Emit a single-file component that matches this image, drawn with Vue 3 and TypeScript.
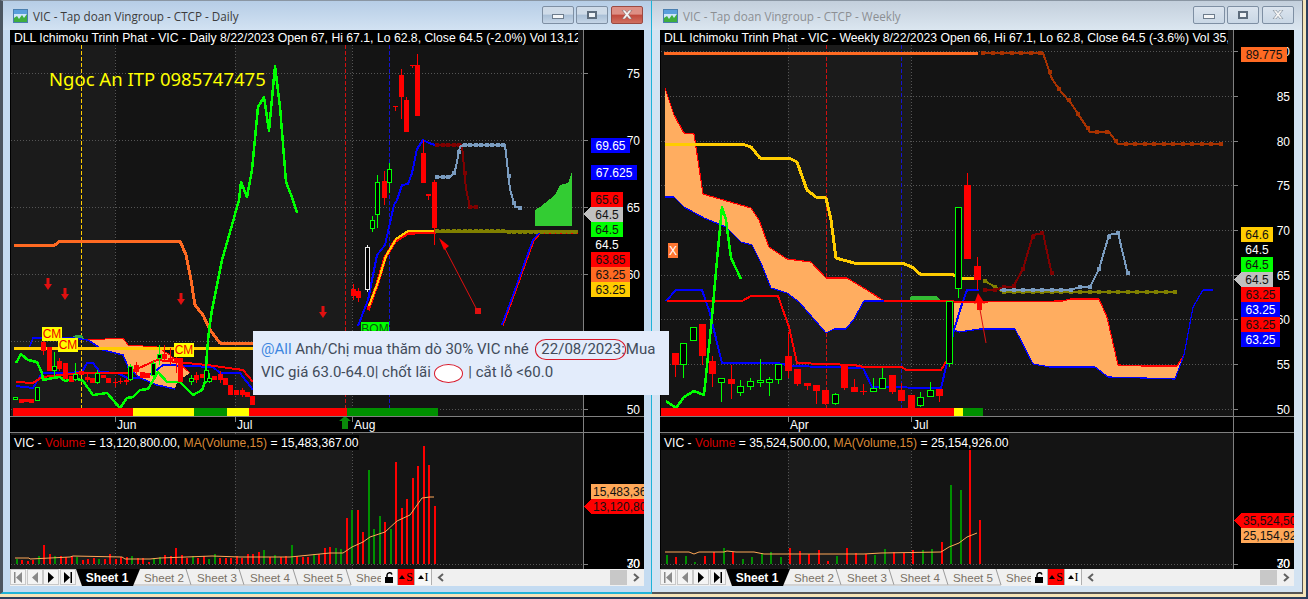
<script setup lang="ts">
type P = [number, number]
interface Line { pts: P[]; color: string; w: number; marker?: number; step?: number; start?: number }
interface Candle { x: number; t: number; b: number; wt?: number; wb?: number; c: 'r' | 'g' | 'w' }
interface Tag { y: number; w: number; text: string; bg: string; fg: string; pointer?: boolean }
interface Seg { x1: number; x2: number; c: string }
interface Bar { x: number; top: number; c: string }
interface Poly { pts: P[]; fill: string }
interface Win {
  key: string; cls: string; title: string; ox: number; legend: string
  volHead: string; volTail: string; volWidth: number
  bands: [number, number][]; grid: number[]; vdots: number[]; ticks: { x: number; label: string }[]
  vdash: { x: number; c: string }[]; clouds: Poly[]; lines: Line[]; candles: Candle[]; strip: Seg[]
  labels: { y: number; t: string }[]; tags: Tag[]; volTags: Tag[]; bars: Bar[]; ma: P[]
}

const R = '#ff0000', B = '#0000ff', Y = '#ffcc00', O = '#ff6a22', G = '#00ff00'
const DR = '#800000', SB = '#7a9cc0', OL = '#808000', RB = '#a83200'

const str = (p: P[]) => p.map((a) => a.join(',')).join(' ')

function markers(l: Line): P[] {
  if (!l.marker || !l.step) return []
  const out: P[] = []
  const first = l.start ?? l.pts[0][0]
  const last = l.pts[l.pts.length - 1][0]
  for (let x = first; x <= last + 0.1; x += l.step) {
    for (let i = 0; i < l.pts.length - 1; i++) {
      const [a, b] = [l.pts[i], l.pts[i + 1]]
      if (x >= a[0] && x <= b[0]) {
        out.push([Math.round(x), Math.round(a[1] + ((b[1] - a[1]) * (x - a[0])) / (b[0] - a[0] || 1))])
        break
      }
    }
  }
  return out
}

function bars(x0: number, step: number, tops: number[], cols: string): Bar[] {
  return tops.map((t, i) => ({
    x: Math.round(x0 + i * step),
    top: Math.round(430 + t / 3),
    c: cols[i] === 'g' ? '#008f00' : R
  }))
}

const leftTops = [387,390,393,390,378,345,372,378,378,380,378,380,390,388,383,388,387,373,388,380,380,378,385,385,395,385,380,375,378,353,375,385,378,383,378,387,372,383,385,383,378,385,372,372,365,360,380,375,380,378,345,378,380,382,372,372,353,350,355,357,265,240,240,307,120,297,258,277,297,97,235,207,145,108,48,105,228]
const leftCols = 'grrrgrrgrrrgrrrgrrrrrgrrrggrrrrrgrrggrrrrrrrrgrgrrgrrrgrrrggrgrrgggrgrrrrrrrr'
const rightTops = [375,380,378,396,377,365,354,365,387,380,369,365,380,353,363,371,360,393,377,354,370,372,375,357,365,369,360,360,357,336,165,180,60,270]
const rightCols = 'grggrrgrgggggrrrrrgrrrggrrrggrggrr'

const c = (x: number, t: number, b: number, col: 'r' | 'g' | 'w', wt?: number, wb?: number): Candle => ({ x, t, b, c: col, wt, wb })

const leftWin: Win = {
  key: 'd', cls: 'active', title: 'VIC - Tap doan Vingroup - CTCP - Daily', ox: 10,
  legend: 'DLL Ichimoku Trinh Phat - VIC - Daily 8/22/2023 Open 67, Hi 67.1, Lo 62.8, Close 64.5 (-2.0%) Vol 13,120,800',
  volHead: '= 13,120,800.00, ', volTail: '= 15,483,367.00', volWidth: 349,
  bands: [[11, 115], [235, 352]],
  grid: [73, 140, 207, 274, 341, 409],
  vdots: [115, 235, 352],
  ticks: [{ x: 115, label: 'Jun' }, { x: 235, label: 'Jul' }, { x: 352, label: 'Aug' }],
  vdash: [{ x: 81.5, c: '#ffcc00' }, { x: 345.5, c: '#d01010' }, { x: 389.5, c: '#1414d0' }],
  clouds: [
    { pts: [[88,340],[123,338],[128,345],[157,347],[170,355],[190,373],[177,382],[175,389],[157,385],[140,378],[128,367],[123,355],[103,350]], fill: '#ffad60' },
    { pts: [[72,337],[76,335],[82,335],[85,340]], fill: '#33aa44' },
    { pts: [[535,226],[535,210],[540,207],[555,195],[560,185],[568,183],[572,172],[572,226]], fill: '#33cc33' }
  ],
  lines: [
    { pts: [[14,245],[55,245],[60,241],[180,241],[186,255],[191,280],[195,305],[203,315],[210,330],[220,343],[253,343]], color: O, w: 3 },
    { pts: [[29,348],[33,338],[73,338],[88,340],[103,350],[123,355],[128,367],[140,378],[157,385],[175,389]], color: B, w: 1.5 },
    { pts: [[16,386],[33,388],[42,373],[67,373],[82,372],[87,363],[93,363],[100,372],[117,373],[128,378],[137,378],[153,373],[163,365],[213,367],[220,373],[240,373],[253,390]], color: B, w: 2 },
    { pts: [[16,382],[33,383],[42,377],[80,373],[110,373],[128,373],[157,360],[207,365],[243,370],[253,382]], color: R, w: 2 },
    { pts: [[88,340],[123,338],[128,345],[157,347],[170,355],[190,373]], color: R, w: 1 },
    { pts: [[14,348],[253,348]], color: Y, w: 3 },
    { pts: [[16,363],[21,354],[28,360],[37,362],[42,373],[43,380],[53,378],[60,377],[65,381],[75,378],[83,381],[93,395],[107,393],[120,408],[127,398],[133,397],[140,390],[148,389],[158,372],[167,382],[180,382],[193,395],[202,390],[205,382],[207,353],[209,330],[212,310],[222,260],[232,225],[239,200],[241,182],[247,197],[252,170],[258,107],[264,97],[269,131],[275,66],[280,107],[286,182],[293,200],[297,213]], color: G, w: 2.5 },
    { pts: [[358,326],[368,300],[377,255],[385,245],[394,205],[397,200],[402,185],[408,184],[412,173],[417,149],[423,140],[429,143],[435,145]], color: B, w: 2 },
    { pts: [[368,310],[377,285],[385,258],[395,241],[408,233],[436,232]], color: R, w: 3.5 },
    { pts: [[369,306],[378,282],[386,256],[396,239],[408,231],[436,231]], color: Y, w: 2 },
    { pts: [[437,145],[462,145],[466,189],[470,207],[478,207]], color: DR, w: 2, marker: 4, step: 5.5 },
    { pts: [[437,177],[450,177],[455,171],[460,147],[463,145],[505,145],[510,189],[515,207],[522,208]], color: SB, w: 2, marker: 3.5, step: 5.5 },
    { pts: [[502,325],[515,290],[525,262],[533,240],[540,232],[578,232]], color: B, w: 2 },
    { pts: [[503,326],[516,291],[526,263],[534,241],[541,233],[578,233]], color: R, w: 1 },
    { pts: [[437,231],[578,232]], color: OL, w: 3, marker: 4, step: 5.5 }
  ],
  candles: [
    c(15,397,399,'g'), c(21,399,403,'r'), c(26,399,402,'r'), c(31,399,403,'r'), c(37,387,400,'g',387,401),
    c(43,342,351,'r',341,355), c(49,347,371,'r'), c(54,366,370,'g',352,378), c(59,361,369,'r',358,371), c(65,363,379,'r'),
    c(71,376,382,'r'), c(75,374,379,'g',363,381), c(81,371,375,'r'), c(87,377,380,'r',373,382), c(92,378,383,'r'),
    c(97,373,382,'g',370,384), c(103,375,378,'r'), c(108,378,383,'r'), c(115,382,383,'r',378,387), c(120,381,382,'r',378,384),
    c(126,380,382,'r',378,385), c(130,366,379,'g',364,381), c(136,365,372,'r',362,375), c(142,372,378,'r'), c(147,373,378,'r'),
    c(153,363,375,'g',361,378), c(159,354,358,'g',345,365), c(164,354,359,'r',345,362), c(170,358,362,'r',348,365), c(176,358,362,'r',350,373),
    c(180,358,382,'r'), c(191,378,381,'g',375,385), c(196,375,380,'r',372,383), c(202,374,378,'r'), c(206,370,381,'g',365,383),
    c(209,378,381,'g',373,383), c(214,376,380,'r'), c(220,374,380,'r',371,383), c(225,378,385,'r'), c(230,385,395,'r'),
    c(236,390,395,'r'), c(242,390,395,'r',388,397), c(247,392,397,'r'), c(252,396,405,'r'),
    c(353,289,296,'r',284,300), c(358,291,298,'r',288,302), c(367,247,289,'w',245,292),
    c(372,220,228,'g',216,232), c(377,182,214,'g',175,228), c(384.5,181,198,'r',171,205), c(389,169,182,'g',163,193),
    c(395,106,107,'r',106,111), c(401,75,97,'r',69,119), c(406.5,100,132,'r',97,132), c(412,65,66,'r',65,68),
    c(417.5,65,116,'r',54,116), c(423,153,183,'r',140,183), c(428,194,196,'r',194,200), c(434,182,228,'r',180,245)
  ],
  strip: [{ x1: 13, x2: 133, c: R }, { x1: 133, x2: 194, c: '#ffff00' }, { x1: 194, x2: 227, c: '#009000' }, { x1: 227, x2: 249, c: '#ffff00' }, { x1: 249, x2: 347, c: R }, { x1: 347, x2: 438, c: '#009000' }],
  labels: [{ y: 73, t: '75' }, { y: 140, t: '70' }, { y: 207, t: '65' }, { y: 274, t: '60' }, { y: 409, t: '50' }],
  tags: [
    { y: 145, w: 39, text: '69.65', bg: B, fg: '#fff' },
    { y: 172, w: 46, text: '67.625', bg: B, fg: '#fff' },
    { y: 199, w: 32, text: '65.6', bg: R, fg: '#111' },
    { y: 214, w: 32, text: '64.5', bg: '#c0c0c0', fg: '#111', pointer: true },
    { y: 229, w: 32, text: '64.5', bg: G, fg: '#111' },
    { y: 244, w: 32, text: '64.5', bg: '#000', fg: '#fff' },
    { y: 259, w: 39, text: '63.85', bg: R, fg: '#111' },
    { y: 274, w: 39, text: '63.25', bg: O, fg: '#111' },
    { y: 289, w: 39, text: '63.25', bg: Y, fg: '#111' }
  ],
  volTags: [
    { y: 491.5, w: 70, text: '15,483,367', bg: '#ffa858', fg: '#111' },
    { y: 506.5, w: 70, text: '13,120,800', bg: R, fg: '#111', pointer: true }
  ],
  bars: bars(15.67, 5.5, leftTops, leftCols),
  ma: [[15,558],[29,558],[30,559],[70,557],[73,556],[122,557],[125,559],[135,559],[150,559],[160,558],[212,556],[240,557],[290,557],[330,553],[343,553],[352,547],[363,542],[370,537],[385,532],[397,521],[410,515],[422,498],[430,497],[434,497]]
}

const rightWin: Win = {
  key: 'w', cls: 'idle', title: 'VIC - Tap doan Vingroup - CTCP - Weekly', ox: 660,
  legend: 'DLL Ichimoku Trinh Phat - VIC - Weekly 8/22/2023 Open 66, Hi 67.1, Lo 62.8, Close 64.5 (-3.6%) Vol 35,524,500',
  volHead: '= 35,524,500.00, ', volTail: '= 25,154,926.00', volWidth: 349,
  bands: [[788, 911]],
  grid: [51, 96, 141, 185.5, 230, 275, 319, 364, 409],
  vdots: [788, 911],
  ticks: [{ x: 788, label: 'Apr' }, { x: 911, label: 'Jul' }],
  vdash: [{ x: 826.5, c: '#d01010' }, { x: 901.5, c: '#1414d0' }],
  clouds: [
    { pts: [[665,88],[674,115],[684,133],[694,134],[703,194],[720,199],[751,208],[759,220],[769,247],[787,259],[811,262],[826,278],[847,278],[867,290],[884,301],[864,301],[854,319],[846,329],[834,329],[826,333],[799,302],[787,293],[771,288],[761,263],[752,245],[741,242],[726,227],[704,218],[684,207],[674,197],[665,197]], fill: '#ffad60' },
    { pts: [[909,301],[911,296],[937,296],[941,301]], fill: '#33bb33' },
    { pts: [[954,302],[980,302],[1063,301],[1070,299],[1099,299],[1107,317],[1118,365],[1143,366],[1177,366],[1184,355],[1175,379],[1143,378],[1108,377],[1095,367],[1050,367],[1033,364],[1015,329],[980,329],[959,332],[954,330]], fill: '#ffad60' }
  ],
  lines: [
    { pts: [[664,53],[978,53]], color: O, w: 3 },
    { pts: [[983,53],[1043,53],[1052,79],[1062,93],[1071,103],[1080,117],[1090,132],[1109,132],[1118,144],[1223,144]], color: RB, w: 2, marker: 4, step: 9.5 },
    { pts: [[665,88],[674,115],[684,133],[694,134],[703,194],[720,199],[751,208],[759,220],[769,247],[787,259],[811,262],[826,278],[847,278],[867,290],[884,301]], color: R, w: 1.2 },
    { pts: [[665,197],[674,197],[684,207],[704,218],[726,227],[741,242],[752,245],[761,263],[771,288],[787,293],[799,302],[826,333],[834,329],[846,329],[854,319],[864,301],[909,301]], color: B, w: 1.2 },
    { pts: [[666,301],[676,290],[702,290],[709,310],[722,363],[777,363],[792,366],[826,367],[863,368],[872,387],[941,388],[947,363],[954,330],[961,307],[967,290],[979,290]], color: B, w: 2 },
    { pts: [[667,301],[742,301],[751,296],[778,296],[789,327],[797,363],[854,365],[864,367],[902,367],[906,370],[941,370],[947,360]], color: R, w: 2 },
    { pts: [[884,301],[954,301]], color: R, w: 1.2 },
    { pts: [[954,302],[980,302],[1063,301],[1070,299],[1099,299],[1107,317],[1118,365],[1143,366],[1177,366],[1184,355]], color: R, w: 1.2 },
    { pts: [[954,330],[959,332],[980,329],[1015,329],[1033,364],[1050,367],[1095,367],[1108,377],[1143,378],[1175,379],[1184,355],[1193,307],[1203,290],[1213,290]], color: B, w: 1.2 },
    { pts: [[665,144],[742,144],[751,147],[760,158],[789,158],[797,162],[807,190],[816,197],[826,198],[831,220],[836,258],[854,263],[902,263],[912,267],[920,274],[951,274],[962,278],[979,278]], color: Y, w: 3 },
    { pts: [[985,281],[995,287],[1003,292],[1175,292]], color: OL, w: 2, marker: 4, step: 9.5 },
    { pts: [[985,290],[995,290],[1004,287],[1013,287],[1023,269],[1033,235],[1043,233],[1052,275]], color: DR, w: 2, marker: 4, step: 9.5 },
    { pts: [[1000,290],[1070,290],[1080,287],[1090,287],[1099,269],[1109,235],[1118,233],[1128,275]], color: SB, w: 2, marker: 4, step: 9.5, start: 1004 },
    { pts: [[666,401],[676,408],[684,397],[694,391],[704,395],[712,317],[717,260],[722,207],[726,220],[731,258],[741,279]], color: G, w: 2.5 }
  ],
  candles: [
    c(675,353,365,'r',353,377), c(683,343,364,'g',343,378), c(693,327,340,'g',327,341), c(702,324,356,'r',324,365),
    c(712,361,374,'r',356,387), c(721,378,382,'g',378,402), c(731,379,384,'r',365,399), c(740,386,392,'g',380,396),
    c(750,381,386,'g',378,390), c(760,380,382,'g',359,387), c(769,379,382,'g',377,396), c(778,364,379,'g',364,384),
    c(788,356,371,'r',332,378), c(797,369,384,'r',369,386), c(807,383,386,'r',383,390), c(816,385,391,'r',385,404),
    c(825,390,404,'r',390,405), c(835,394,403,'g',393,405), c(844,366,388,'r',366,390), c(854,387,392,'r',379,392),
    c(863,391,392,'r',384,395), c(873,388,391,'g',378,391), c(882,378,388,'g',368,388), c(892,375,392,'r',375,394),
    c(901,390,401,'r',383,401), c(911,395,408,'r',395,408), c(920,397,405,'g',392,407), c(930,390,396,'g',382,396),
    c(939,389,396,'r',389,402), c(949,301,363,'g',301,367), c(958,207,288,'g',207,298), c(967,185,259,'r',173,259),
    c(977,266,280,'r',257,290)
  ],
  strip: [{ x1: 661, x2: 954, c: R }, { x1: 954, x2: 963, c: '#ffff00' }, { x1: 963, x2: 983, c: '#009000' }],
  labels: [{ y: 51, t: '90' }, { y: 96, t: '85' }, { y: 141, t: '80' }, { y: 185.5, t: '75' }, { y: 230, t: '70' }, { y: 275, t: '65' }, { y: 319, t: '60' }, { y: 364, t: '55' }, { y: 409, t: '50' }],
  tags: [
    { y: 54, w: 46, text: '89.775', bg: O, fg: '#111' },
    { y: 234.5, w: 32, text: '64.6', bg: Y, fg: '#111' },
    { y: 249.5, w: 32, text: '64.5', bg: '#000', fg: '#fff' },
    { y: 264.5, w: 32, text: '64.5', bg: G, fg: '#111' },
    { y: 279.5, w: 32, text: '64.5', bg: '#c0c0c0', fg: '#111', pointer: true },
    { y: 294.5, w: 39, text: '63.25', bg: R, fg: '#111' },
    { y: 309.5, w: 39, text: '63.25', bg: B, fg: '#fff' },
    { y: 324.5, w: 39, text: '63.25', bg: R, fg: '#111' },
    { y: 339.5, w: 39, text: '63.25', bg: B, fg: '#fff' }
  ],
  volTags: [
    { y: 520.5, w: 70, text: '35,524,500', bg: R, fg: '#111', pointer: true },
    { y: 535.5, w: 70, text: '25,154,926', bg: '#ffa858', fg: '#111' }
  ],
  bars: bars(666, 9.47, rightTops, rightCols),
  ma: [[665,552],[689,552],[694,554],[699,552],[724,552],[727,551],[736,552],[754,552],[764,554],[841,554],[844,554],[864,554],[881,553],[941,552],[949,547],[959,543],[967,537],[977,533]]
}

const windows: Win[] = [leftWin, rightWin]
const rect = (pts: P[]) => str(pts)

const tagPoints = (ox: number, t: Tag): string => {
  const x = ox + 581
  const top = t.y - 7.5
  const r = x + t.w
  if (t.pointer) return rect([[x - 7, t.y], [x, top], [r, top], [r, top + 15], [x, top + 15]])
  return rect([[x, top], [r, top], [r, top + 15], [x, top + 15]])
}

const downArrows: P[] = [[48, 278], [65, 288], [181, 293], [323, 306]]
const cmTags = [{ x: 42, y: 327 }, { x: 58, y: 338 }, { x: 174, y: 343 }]
const tabs = ['Sheet 2', 'Sheet 3', 'Sheet 4', 'Sheet 5', 'Sheet 6']
const slashes = [133, 186, 239, 293, 346]
</script>

<template>
  <div class="desk">
    <div class="windows">
      <section v-for="w in windows" :key="w.key" class="win" :class="w.cls">
        <header class="titlebar">
          <svg class="appicon" width="15" height="14" viewBox="0 0 15 14">
            <rect x="0.5" y="0.5" width="14" height="13" fill="#cfe6fb" stroke="#4a7fb0" />
            <rect x="1" y="1" width="13" height="4" fill="#5a9fdc" />
            <path d="M1 13V9L4 7L6 10L9 6L11 9L14 5V13Z" fill="#3fae3f" />
          </svg>
          <span class="wintitle">{{ w.title }}</span>
          <div class="controls">
            <span class="wbtn"><i class="minbar"></i></span>
            <span class="wbtn"><i class="maxbox"></i></span>
            <span class="wbtn closebtn">
              <svg width="12" height="9" viewBox="0 0 12 9"><path d="M1 0H4L6 2.6L8 0H11L7.6 4.5L11 9H8L6 6.4L4 9H1L4.4 4.5Z" /></svg>
            </span>
          </div>
        </header>

        <div class="chart">
          <svg class="pane" width="634" height="403" :viewBox="`${w.ox} 30 634 403`">
            <rect :x="w.ox + 1" y="30" width="572" height="386" fill="#141414" />
            <rect v-for="b in w.bands" :key="b[0]" :x="b[0]" y="30" :width="b[1] - b[0]" height="386" fill="#1b1b1b" />
            <g shape-rendering="crispEdges">
              <line v-for="y in w.grid" :key="y" :x1="w.ox + 1" :x2="w.ox + 573" :y1="y" :y2="y" class="dots" />
              <line v-for="x in w.vdots" :key="x" :x1="x" :x2="x" y1="45" y2="416" class="dots" />
              <line v-for="d in w.vdash" :key="d.x" :x1="d.x" :x2="d.x" y1="45" y2="416" :stroke="d.c" stroke-dasharray="4 2" />
              <line v-for="y in w.grid" :key="'t' + y" :x1="w.ox + 573" :x2="w.ox + 578" :y1="y" :y2="y" stroke="#808080" />
            </g>

            <polygon v-for="(p, i) in w.clouds" :key="'cl' + i" :points="str(p.pts)" :fill="p.fill" shape-rendering="crispEdges" />

            <g v-for="(l, i) in w.lines" :key="'l' + i" shape-rendering="crispEdges">
              <polyline :points="str(l.pts)" :stroke="l.color" :stroke-width="l.w" fill="none" stroke-linejoin="round" />
              <rect v-for="(m, j) in markers(l)" :key="j" :x="m[0] - (l.marker ?? 0) / 2" :y="m[1] - (l.marker ?? 0) / 2" :width="l.marker" :height="l.marker" :fill="l.color" />
            </g>

            <g v-for="(k, i) in w.candles" :key="'c' + i" shape-rendering="crispEdges">
              <line :x1="k.x" :x2="k.x" :y1="k.wt ?? k.t" :y2="k.wb ?? k.b" :stroke="k.c === 'r' ? '#ff0000' : k.c === 'g' ? '#00ff00' : '#e8e8e8'" />
              <rect v-if="k.c === 'r'" :x="k.x - (w.ox > 100 ? 3.5 : 2.5)" :y="k.t" :width="w.ox > 100 ? 7 : 5" :height="k.b - k.t" fill="#ff0000" />
              <rect v-else :x="k.x - (w.ox > 100 ? 3 : 2)" :y="k.t" :width="w.ox > 100 ? 6 : 4" :height="k.b - k.t" fill="#000" :stroke="k.c === 'g' ? '#00ff00' : '#e8e8e8'" />
            </g>

            <rect v-for="s in w.strip" :key="s.x1" :x="s.x1" y="408" :width="s.x2 - s.x1" height="8" :fill="s.c" />

            <template v-if="w.key === 'd'">
              <text x="49" y="86" class="brand">Ngoc An ITP 0985747475</text>
              <polygon v-for="a in downArrows" :key="a[0]" :points="`${a[0]-1.5},${a[1]} ${a[0]+1.5},${a[1]} ${a[0]+1.5},${a[1]+6} ${a[0]+4},${a[1]+6} ${a[0]},${a[1]+12} ${a[0]-4},${a[1]+6} ${a[0]-1.5},${a[1]+6}`" fill="#e01010" />
              <g v-for="m in cmTags" :key="m.x">
                <rect :x="m.x" :y="m.y" width="20" height="14" fill="#ffff00" />
                <text :x="m.x + 10" :y="m.y + 11" text-anchor="middle" class="cm">CM</text>
              </g>
              <rect x="361" y="322" width="28" height="14" fill="#00ff00" />
              <text x="375" y="333" text-anchor="middle" class="cm dark">BOM</text>
              <polyline points="441,241 477,310" stroke="#e01010" fill="none" />
              <rect x="475" y="308" width="6" height="6" fill="#e01010" />
              <polygon points="439,238 444,250 449,246" fill="#ff0000" />
              <polygon points="342,429 348,429 348,421 351,421 345,416 339,421 342,421" fill="#0a8a0a" />
            </template>
            <template v-else>
              <rect x="668" y="243" width="10" height="15" fill="#ff7733" />
              <text x="673" y="255" text-anchor="middle" class="xmark">X</text>
              <polygon points="978,293 974,304 977,303 977,310 982,310 982,303 985,304" fill="#ff0000" />
              <polyline points="979,304 986,343" stroke="#e01010" fill="none" />
            </template>

            <g shape-rendering="crispEdges">
              <line :x1="w.ox" :x2="w.ox + 634" y1="416.5" y2="416.5" stroke="#808080" />
              <line :x1="w.ox" :x2="w.ox + 634" y1="432.5" y2="432.5" stroke="#808080" />
              <line :x1="w.ox + 573.5" :x2="w.ox + 573.5" y1="30" y2="433" stroke="#808080" />
              <line v-for="t in w.ticks" :key="t.x" :x1="t.x" :x2="t.x" y1="416" y2="422" stroke="#808080" />
            </g>
            <text v-for="t in w.ticks" :key="t.label" :x="t.x + 2" y="429" class="axis">{{ t.label }}</text>

            <text v-for="t in w.labels" :key="t.t" :x="w.ox + 630" :y="t.y + 4.5" text-anchor="end" class="axis">{{ t.t }}</text>
            <g v-for="(t, i) in w.tags" :key="'tg' + i">
              <polygon :points="tagPoints(w.ox, t)" :fill="t.bg" shape-rendering="crispEdges" />
              <text :x="w.ox + 581 + t.w / 2" :y="t.y + 4.5" text-anchor="middle" class="tagtext" :fill="t.fg">{{ t.text }}</text>
            </g>
          </svg>

          <svg class="pane" width="634" height="136" :viewBox="`${w.ox} 433 634 136`">
            <rect :x="w.ox + 1" y="433" width="572" height="136" fill="#141414" />
            <rect v-for="b in w.bands" :key="b[0]" :x="b[0]" y="433" :width="b[1] - b[0]" height="136" fill="#1b1b1b" />
            <g shape-rendering="crispEdges">
              <line v-for="x in w.vdots" :key="x" :x1="x" :x2="x" y1="433" y2="569" class="dots" />
              <line :x1="w.ox + 1" :x2="w.ox + 573" y1="564.5" y2="564.5" class="dots" />
              <line :x1="w.ox + 573" :x2="w.ox + 578" y1="564.5" y2="564.5" stroke="#808080" />
              <rect v-for="(b, i) in w.bars" :key="i" :x="b.x" :y="b.top" width="2" :height="564 - b.top" :fill="b.c" />
              <line :x1="w.ox + 573.5" :x2="w.ox + 573.5" y1="433" y2="569" stroke="#808080" />
            </g>
            <polyline :points="str(w.ma)" stroke="#ffa858" fill="none" />
            <text :x="w.ox + 630" y="568" text-anchor="end" class="axis">30</text>
            <text :x="w.ox + 630" y="568" text-anchor="end" class="axis">70</text>
            <g v-for="(t, i) in w.volTags" :key="'vt' + i">
              <polygon :points="tagPoints(w.ox, t)" :fill="t.bg" shape-rendering="crispEdges" />
              <text :x="w.ox + 583" :y="t.y + 4.5" class="tagtext" :fill="t.fg">{{ t.text }}</text>
            </g>
          </svg>

          <div class="legend price">{{ w.legend }}</div>
          <div class="legend vol">VIC - <span class="redt">Volume</span> {{ w.volHead }}<span class="oranget">MA(Volume,15)</span> {{ w.volTail }}</div>
        </div>

        <footer class="tabbar">
          <div class="navs">
            <span class="nav"><svg width="10" height="11" viewBox="0 0 10 11"><path d="M1 0H2.5V11H1ZM9 0V11L3 5.5Z" fill="#8a8a8a" /></svg></span>
            <span class="nav"><svg width="8" height="11" viewBox="0 0 8 11"><path d="M7 0V11L1 5.5Z" fill="#8a8a8a" /></svg></span>
            <span class="nav"><svg width="8" height="11" viewBox="0 0 8 11"><path d="M1 0V11L7 5.5Z" fill="#000" /></svg></span>
            <span class="nav"><svg width="10" height="11" viewBox="0 0 10 11"><path d="M1 0V11L7 5.5ZM7.5 0H9V11H7.5Z" fill="#000" /></svg></span>
          </div>
          <svg class="sheets" width="305" height="17" viewBox="76 569 305 17">
            <path v-for="x in slashes.slice(1)" :key="x" :d="`M${x} 569L${x + 5} 585`" stroke="#9a9a9a" fill="none" />
            <path d="M133 585H351" stroke="#b5b5b5" fill="none" />
            <polygon points="76,569 140,569 133,586 82,586" fill="#000" />
            <text x="107" y="582" text-anchor="middle" class="sheetOn">Sheet 1</text>
            <text v-for="(t, i) in tabs" :key="t" :x="144 + i * 53" y="582" class="sheet">{{ t }}</text>
          </svg>
          <span class="tool">
            <svg width="11" height="11" viewBox="0 0 11 11"><path d="M3 5V3A2.6 2.6 0 0 1 8 2.4" stroke="#000" stroke-width="1.5" fill="none" /><rect x="1" y="5" width="8" height="6" fill="#000" /></svg>
          </span>
          <span class="tool on"><i class="tri"></i>S</span>
          <span class="tool"><i class="tri"></i>I</span>
          <div class="scroll">
            <svg width="8" height="9" viewBox="0 0 8 9"><path d="M6 1L2 4.5L6 8" stroke="#606060" stroke-width="2" fill="none" /></svg>
            <span class="thumb"></span>
            <svg width="8" height="9" viewBox="0 0 8 9"><path d="M2 1L6 4.5L2 8" stroke="#606060" stroke-width="2" fill="none" /></svg>
          </div>
        </footer>
      </section>
    </div>

    <aside class="note">
      <p><span class="at">@All</span> Anh/Chị mua thăm dò 30% VIC nhé <span class="date">22/08/2023:</span>Mua</p>
      <p>VIC giá 63.0-64.0| chốt lãi <span class="oval"></span> | cắt lỗ &lt;60.0</p>
    </aside>
  </div>
</template>

<style>
html, body { margin: 0; padding: 0; background: #2c3e5c; }
</style>

<style scoped>
.desk {
  position: relative;
  width: 1308px;
  height: 599px;
  box-sizing: border-box;
  overflow: hidden;
  background: #f4e4b8;
  border-right: 2px solid #2c3e5c;
  border-bottom: 2px solid #2c3e5c;
  font-family: "Liberation Sans", Arial, sans-serif;
}
.windows { display: flex; align-items: flex-start; }
.win {
  box-sizing: border-box;
  height: 594px;
  display: flex;
  flex-direction: column;
  background: #d3e3f2;
  border-top: 1px solid #8a96a3;
  border-right-style: solid;
  border-bottom-style: solid;
}
.win.active {
  width: 652px;
  padding: 0 7px 6px 7px;
  border-left: 3px solid #4b5560;
  border-right-width: 1px;
  border-bottom-width: 2px;
  border-right-color: #1fb3d8;
  border-bottom-color: #1fb3d8;
  background: #c4dbf1;
}
.win.idle {
  width: 651px;
  padding: 0 8px 6px 8px;
  border-left: 0;
  border-right-width: 1px;
  border-bottom-width: 2px;
  border-right-color: #555;
  border-bottom-color: #555;
}
.titlebar {
  flex: none;
  height: 29px;
  display: flex;
  align-items: center;
  gap: 5px;
  margin: 0 -7px 0 -7px;
  padding: 0 2px 0 10px;
}
.win.active .titlebar { background: linear-gradient(#b6cde6, #d2e2f2); }
.win.idle .titlebar { margin: 0 -8px; padding: 0 2px 0 11px; background: linear-gradient(#c3cfdc, #dbe6f0); }
.appicon { flex: none; }
.wintitle {
  flex: 1;
  font: 11.7px "Open Sans", "Noto Sans", sans-serif;
  color: #3c3c3c;
}
.win.idle .wintitle { color: #8c8f93; }
.controls { display: flex; gap: 2px; padding-right: 6px; margin-top: -2px; }
.wbtn {
  box-sizing: border-box;
  width: 32px;
  height: 18px;
  display: flex;
  align-items: center;
  justify-content: center;
  border: 1px solid #7e8fa3;
  border-radius: 2px;
  background: linear-gradient(#cfdbe8 45%, #a9bfd6 50%, #c5d5e6);
}
.win.idle .wbtn { background: linear-gradient(#dbe4ee, #c9d7e5); }
.closebtn { margin-left: 1px; }
.closebtn svg { fill: #f4f4f4; stroke: #6b4a4a; stroke-width: 0.5; }
.win.active .closebtn { border-color: #9b4a42; background: linear-gradient(#dd8f85 45%, #c0483c 50%, #cf6f60); }
.win.idle .closebtn svg { stroke: #5a6a7a; }
.minbar { display: block; width: 10px; height: 3px; background: #f4f6f8; border: 1px solid #6d7c8c; margin-top: 4px; }
.maxbox { box-sizing: border-box; display: block; width: 10px; height: 8px; border: 2px solid #5d6c7c; background: #eef2f6; border-top-width: 2px; }
.chart {
  position: relative;
  flex: none;
  width: 634px;
  height: 539px;
  background: #000;
}
.pane { display: block; background: #000; }
.legend {
  position: absolute;
  left: 0;
  height: 15px;
  padding-left: 4px;
  box-sizing: border-box;
  background: #000;
  color: #fff;
  font-size: 12.14px;
  line-height: 17px;
  white-space: nowrap;
  overflow: hidden;
}
.legend.price { top: 0; width: 568px; font-size: 12.22px; }
.legend.vol { top: 405px; width: 349px; }
.redt { color: #d40000; }
.oranget { color: #d88a3a; }
.dots { stroke: #555; stroke-dasharray: 1 2; }
.brand { fill: #ffff00; font: 18.5px "Noto Sans", "Open Sans", sans-serif; }
.cm { fill: #ee0000; font: 12px "Liberation Sans", Arial, sans-serif; }
.cm.dark { fill: #0a5a0a; }
.xmark { fill: #fff; font: 12px "Liberation Sans", Arial, sans-serif; }
.axis { fill: #fff; font: 12px "Liberation Sans", Arial, sans-serif; }
.tagtext { font: 12px "Liberation Sans", Arial, sans-serif; }
.tabbar {
  flex: none;
  width: 634px;
  height: 17px;
  display: flex;
  background: #f0f0f0;
}
.navs { flex: none; width: 66px; display: flex; }
.nav {
  box-sizing: border-box;
  width: 16px;
  margin-right: 0.5px;
  height: 16px;
  display: flex;
  align-items: center;
  justify-content: center;
  background: #f4f4f4;
  border: 1px solid #c8c8c8;
}
.sheets { flex: none; display: block; }
.sheet { fill: #7a7065; font: 11.6px "Liberation Sans", Arial, sans-serif; }
.sheetOn { fill: #fff; font: bold 12px "Liberation Sans", Arial, sans-serif; }
.tool {
  box-sizing: border-box;
  flex: none;
  width: 17px;
  height: 16px;
  display: flex;
  align-items: center;
  justify-content: center;
  gap: 1px;
  background: #f8f8f8;
  border-right: 1px solid #b0b0b0;
  font: 12px "Liberation Serif", serif;
  color: #000;
}
.tool.on { background: #ff0000; }
.tri { display: block; width: 0; height: 0; border: 3px solid transparent; border-top: 0; border-bottom: 4px solid #000; }
.scroll {
  flex: 1;
  display: flex;
  align-items: center;
  padding: 0 4px 0 5px;
  margin-bottom: 1px;
}
.scroll .thumb { flex: none; width: 17px; height: 15px; background: #c8c8c8; margin-left: auto; margin-right: 5px; }
.note {
  position: absolute;
  left: 253px;
  top: 331px;
  width: 416px;
  height: 64px;
  box-sizing: border-box;
  padding: 7px 8px;
  background: #e3ecfb;
  color: #414b5a;
  font: 15px/23px Roboto, "Noto Sans", sans-serif;
}
.note p { margin: 0; white-space: nowrap; }
.at { color: #3c86e0; }
.date {
  display: inline-block;
  box-sizing: border-box;
  height: 21px;
  margin-left: 3px;
  line-height: 19px;
  padding: 0 0 0 5px;
  border: 1px solid #d8182a;
  border-radius: 11px / 10px;
}
.oval {
  display: inline-block;
  vertical-align: middle;
  box-sizing: border-box;
  width: 29px;
  height: 19px;
  margin: 0 2px 0 -1px;
  background: #fff;
  border: 1px solid #d8182a;
  border-radius: 50%;
}
</style>
